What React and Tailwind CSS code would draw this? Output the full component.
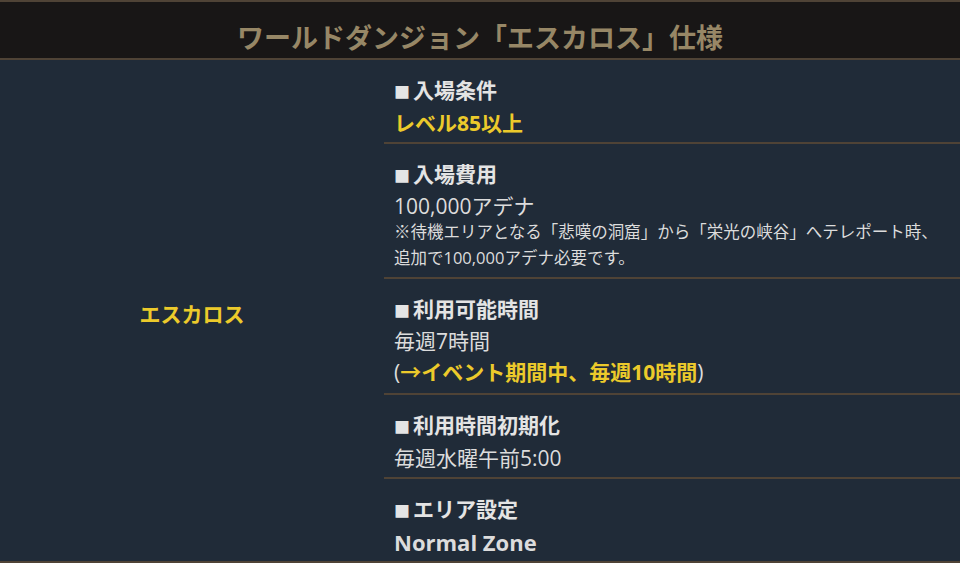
import React from 'react';

const font = { fontFamily: '"Open Sans", "Noto Sans CJK JP", sans-serif' };

const Line = ({ className = '', children }) => (
  <div className={`h-[32px] leading-[32px] whitespace-nowrap ${className}`}>{children}</div>
);

const rows = [
  {
    title: '入場条件',
    pb: 'pb-[3px]',
    body: <Line className="font-bold text-[#ecca2b]">レベル85以上</Line>,
  },
  {
    title: '入場費用',
    pb: 'pb-[6px]',
    body: (
      <>
        <div className="h-[28px] leading-[30px]">100,000アデナ</div>
        <div className="text-[16.5px]">
          <div className="h-[26px] leading-[26px]">
            ※待機エリアとなる「悲嘆の洞窟」から「栄光の峡谷」へテレポート時、
          </div>
          <div className="h-[26px] leading-[26px]">追加で100,000アデナ必要です。</div>
        </div>
      </>
    ),
  },
  {
    title: '利用可能時間',
    pb: 'pb-[6px]',
    body: (
      <>
        <div className="h-[31px] leading-[30px]">毎週7時間</div>
        <div className="h-[30px] leading-[30px]">
          (<span className="font-bold text-[#ecca2b]">→イベント期間中、毎週10時間</span>)
        </div>
      </>
    ),
  },
  {
    title: '利用時間初期化',
    pb: 'pb-[3px]',
    body: <Line>毎週水曜午前5:00</Line>,
  },
  {
    title: 'エリア設定',
    pb: 'pb-[3px]',
    body: <Line className="font-bold text-[22px]">Normal Zone</Line>,
  },
];

const App = () => {
  return (
    <div className="w-[960px] h-[563px] overflow-hidden bg-[#202b38] text-[#dcdcdc]" style={font}>
      {/* header */}
      <div className="bg-[#181616] border-t-2 border-b-2 border-[#4f4336] pt-[18px] pb-[2px]">
        <h1 className="text-center text-[27px] leading-[36px] font-bold text-[#978766]">
          ワールドダンジョン「エスカロス」仕様
        </h1>
      </div>

      <div className="flex border-b-2 border-[#4f4336]">
        <div className="w-[384px] flex items-center justify-center pt-[9px]">
          <span className="text-[21px] font-bold text-[#ecca2b]">エスカロス</span>
        </div>
        <div className="flex-1">
          {rows.map((row, i) => (
            <div
              key={row.title}
              className={`pl-[10px] pt-[15px] ${row.pb} text-[21px] ${
                i < rows.length - 1 ? 'border-b-2 border-[#4f4336]' : ''
              }`}
            >
              <div className="h-[32px] leading-[30px] whitespace-nowrap font-bold text-[#e4e4e4]">
                <span className="text-[16px] mr-[3px]">■</span>
                {row.title}
              </div>
              {row.body}
            </div>
          ))}
        </div>
      </div>
    </div>
  );
};

export default App;
